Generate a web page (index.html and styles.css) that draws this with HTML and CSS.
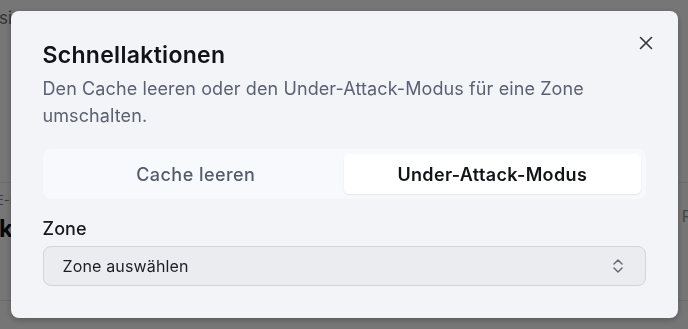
FILE: index.html
```html
<!DOCTYPE html>
<html lang="de">
<head>
<meta charset="utf-8">
<title>Schnellaktionen</title>
<link rel="stylesheet" href="styles.css">
</head>
<body>
<div class="page">
  <div class="page-top">sicht</div>
  <div class="page-section">
    <div class="section-row">
      <div class="section-left">
        <div class="eyebrow">E-ID</div>
        <div class="big">kontakt</div>
      </div>
      <div class="section-right">R</div>
    </div>
  </div>
  <div class="page-section last"></div>
</div>

<div class="overlay">
  <div class="modal" role="dialog" aria-labelledby="dlg-title">
    <button class="close" aria-label="Schließen">
      <svg width="14" height="14" viewBox="0 0 14 14" fill="none" stroke="currentColor" stroke-width="1.6" stroke-linecap="round"><path d="M1.5 1.5 L12.5 12.5 M12.5 1.5 L1.5 12.5"/></svg>
    </button>
    <h2 class="title" id="dlg-title">Schnellaktionen</h2>
    <p class="desc">Den Cache leeren oder den Under-Attack-Modus für eine Zone umschalten.</p>
    <div class="tabs">
      <div class="tab">Cache leeren</div>
      <div class="tab active">Under-Attack-Modus</div>
    </div>
    <div class="field">
      <label class="label">Zone</label>
      <div class="select">
        <span>Zone auswählen</span>
        <svg width="14" height="18" viewBox="0 0 14 18" fill="none" stroke="currentColor" stroke-width="1.5" stroke-linecap="round" stroke-linejoin="round"><path d="M3 7 L7 3 L11 7 M3 11 L7 15 L11 11"/></svg>
      </div>
    </div>
  </div>
</div>
</body>
</html>
```

FILE: styles.css
```css
* { box-sizing: border-box; }
html, body { margin: 0; padding: 0; }
body {
  font-family: Inter, "Noto Sans", "Liberation Sans", sans-serif;
  background: #ececec;
  width: 688px;
  height: 329px;
  overflow: hidden;
  position: relative;
}
.page {
  height: 329px;
  display: flex;
  flex-direction: column;
}
.page-top {
  padding: 7px 0 0 0;
  margin-left: -1px;
  font-size: 17px;
  line-height: 22px;
  color: #666;
  height: 182px;
  white-space: nowrap;
}
.page-section {
  border-top: 1px solid #d8d8d8;
  height: 118px;
  flex: none;
}
.page-section.last { height: auto; flex: 1; }
.section-row {
  display: flex;
  justify-content: space-between;
}
.section-left { padding-top: 9px; }
.eyebrow { font-size: 13px; line-height: 16px; color: #7a7a7a; margin-left: -4px; }
.big { font-size: 24px; line-height: 29px; font-weight: 700; color: #111; margin-top: 6px; margin-left: -1px; }
.section-right { font-size: 16px; line-height: 20px; color: #8a8a8a; padding-top: 23px; margin-right: -4px; }

.overlay {
  position: fixed;
  inset: 0;
  background: rgba(0, 0, 0, 0.5);
  display: grid;
  place-items: center;
}
.modal {
  position: relative;
  width: 667px;
  background: #f3f4f8;
  border-radius: 8px;
  padding: 30px 32px 32px;
  box-shadow: 0 2px 6px rgba(0,0,0,0.25);
}
.close {
  position: absolute;
  top: 25px;
  right: 25px;
  width: 14px;
  height: 14px;
  padding: 0;
  border: 0;
  background: none;
  color: #333;
  display: flex;
}
.title {
  margin: 0;
  font-size: 23px;
  line-height: 28px;
  font-weight: 600;
  letter-spacing: 0.3px;
  color: #111318;
}
.desc {
  margin: 6px 0 0;
  font-size: 18px;
  line-height: 27px;
  letter-spacing: 0.1px;
  color: #5b6173;
}
.tabs {
  margin-top: 20px;
  display: grid;
  grid-template-columns: 1fr 1fr;
  padding: 5px;
  background: #f8f9fc;
  border-radius: 8px;
}
.tab {
  height: 40px;
  display: flex;
  align-items: center;
  justify-content: center;
  font-size: 18px;
  font-weight: 500;
  letter-spacing: 0.45px;
  color: #525a6c;
  border-radius: 5px;
}
.tab.active {
  background: #ffffff;
  color: #111318;
  font-weight: 600;
  letter-spacing: 0.35px;
  box-shadow: 0 1px 2px rgba(0,0,0,0.08);
}
.field { margin-top: 17px; display: flex; flex-direction: column; gap: 4px; }
.label {
  font-size: 18px;
  line-height: 26px;
  font-weight: 500;
  letter-spacing: 0.1px;
  color: #15171c;
}
.select {
  height: 40px;
  border: 1px solid #d2d4da;
  background: #ebecf0;
  border-radius: 8px;
  display: flex;
  align-items: center;
  justify-content: space-between;
  padding: 0 20px 0 19px;
  font-size: 16px;
  letter-spacing: 0.15px;
  color: #1c1e24;
}
.select svg { color: #666a74; }
```
